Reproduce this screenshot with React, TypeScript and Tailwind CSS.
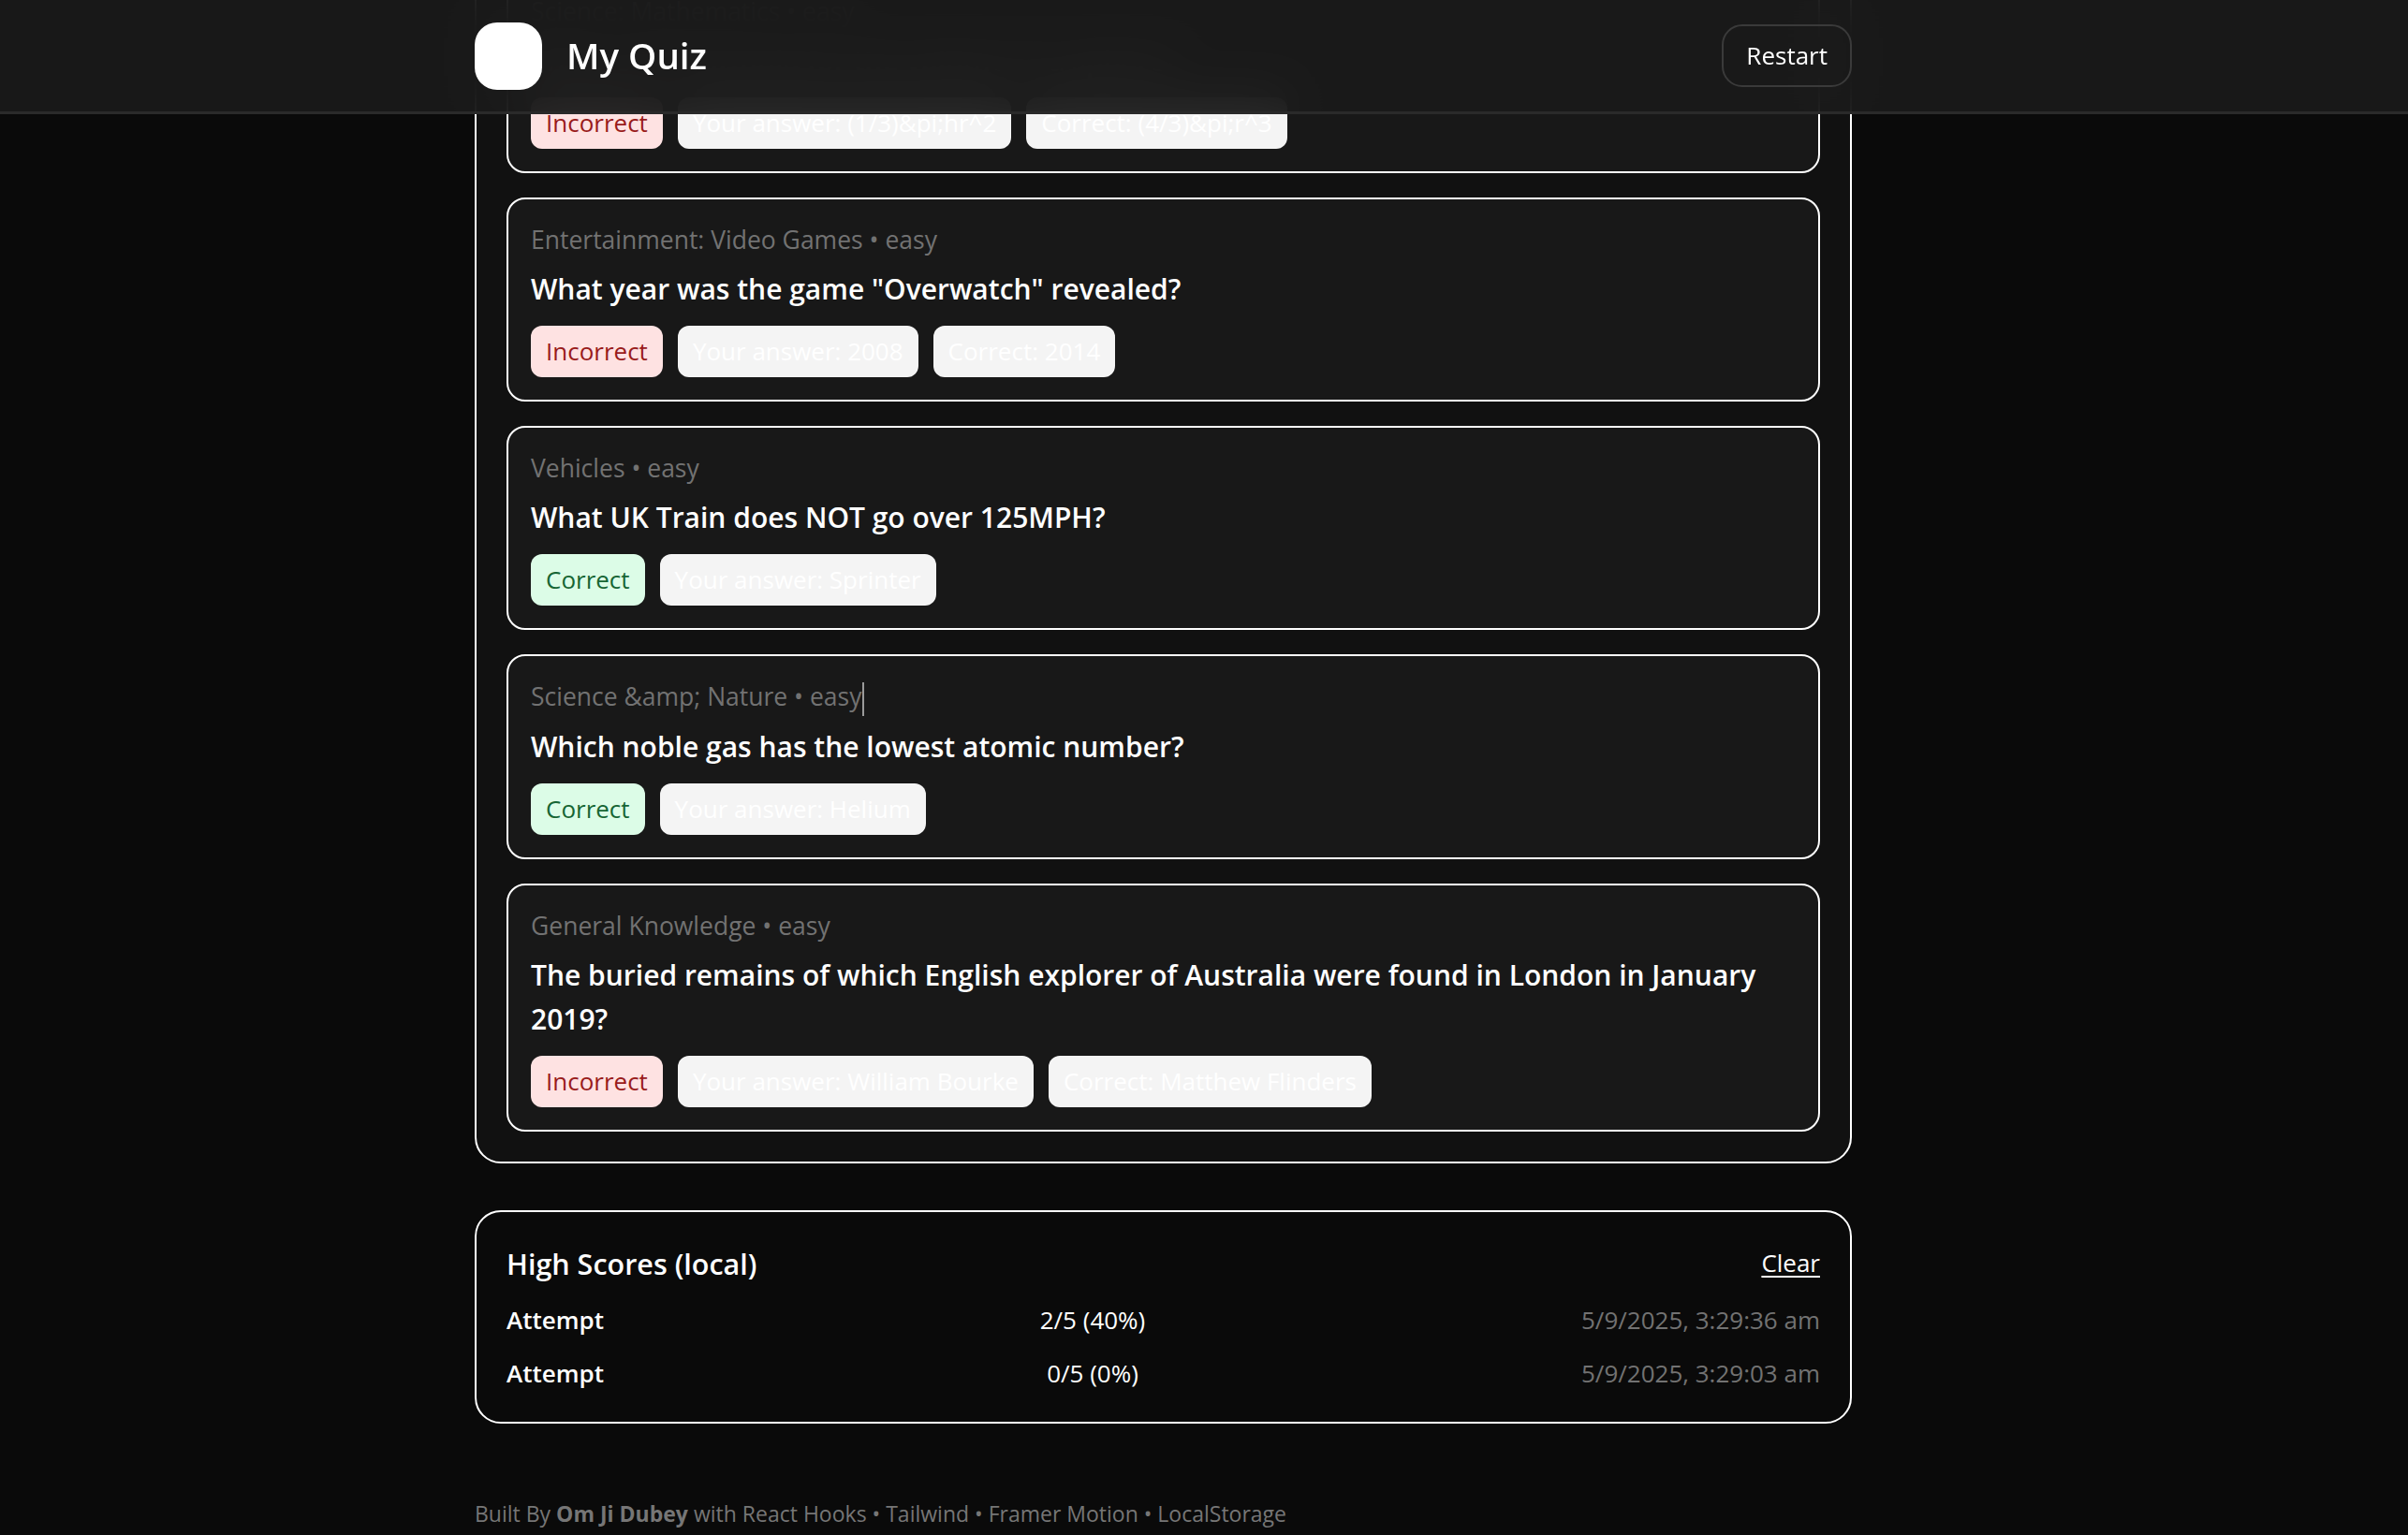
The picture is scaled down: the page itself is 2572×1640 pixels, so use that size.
import React from "react";

type Result = {
  category: string;
  difficulty: string;
  question: string;
  correct: boolean;
  answer: string;
  right?: string;
  caret?: boolean;
};

const RESULTS: Result[] = [
  {
    category: "Science: Mathematics",
    difficulty: "easy",
    question: "What is the formula for the volume of a sphere?",
    correct: false,
    answer: "(1/3)&pi;hr^2",
    right: "(4/3)&pi;r^3",
  },
  {
    category: "Entertainment: Video Games",
    difficulty: "easy",
    question: 'What year was the game "Overwatch" revealed?',
    correct: false,
    answer: "2008",
    right: "2014",
  },
  {
    category: "Vehicles",
    difficulty: "easy",
    question: "What UK Train does NOT go over 125MPH?",
    correct: true,
    answer: "Sprinter",
  },
  {
    category: "Science &amp; Nature",
    difficulty: "easy",
    question: "Which noble gas has the lowest atomic number?",
    correct: true,
    answer: "Helium",
    caret: true,
  },
  {
    category: "General Knowledge",
    difficulty: "easy",
    question:
      "The buried remains of which English explorer of Australia were found in London in January 2019?",
    correct: false,
    answer: "William Bourke",
    right: "Matthew Flinders",
  },
];

const SCORES = [
  { score: "2/5 (40%)", date: "5/9/2025, 3:29:36 am" },
  { score: "0/5 (0%)", date: "5/9/2025, 3:29:03 am" },
];

function ResultCard({ r }: { r: Result }) {
  return (
    <div className="rounded-[20px] border-2 border-white bg-[#181818] p-6">
      <div className="text-[26.5px] leading-[39px] text-[#727272]">
        {r.category} • {r.difficulty}
        {r.caret && (
          <span className="ml-px inline-block h-[36px] w-[2px] bg-[#9a9a9a] align-middle" />
        )}
      </div>
      <div className="mt-[9px] text-[30px] font-semibold leading-[47px] text-white">
        {r.question}
      </div>
      <div className="mt-4 flex flex-wrap gap-4 text-[26px] leading-[39px]">
        {r.correct ? (
          <span className="rounded-[12px] bg-[#dcfce7] px-4 py-2 text-[#166534]">Correct</span>
        ) : (
          <span className="rounded-[12px] bg-[#fee2e2] px-4 py-2 text-[#991b1b]">Incorrect</span>
        )}
        <span className="rounded-[12px] bg-[#f4f4f4] px-4 py-2 text-white">
          Your answer: {r.answer}
        </span>
        {r.right && (
          <span className="rounded-[12px] bg-[#f4f4f4] px-4 py-2 text-white">
            Correct: {r.right}
          </span>
        )}
      </div>
    </div>
  );
}

export default function App() {
  return (
    <div className="h-screen overflow-hidden bg-[#0a0a0a] font-['Open_Sans',sans-serif] text-white">
      {/* Header */}
      <header className="sticky top-0 z-10 h-[122px] border-b-[3px] border-[#2a2a2a] bg-[#1a1a1a]/[0.93] pr-[87px] backdrop-blur-[24px]">
        <div className="mx-auto flex h-full w-[1471px] items-center justify-between">
          <div className="flex items-center gap-[26px]">
            <div className="size-[72px] rounded-[24px] bg-white" />
            <span className="text-[38.5px] font-semibold">My Quiz</span>
          </div>
          <button className="h-[67px] rounded-[22px] border-2 border-[#3a3a3a] px-[24px] text-[26px]">
            Restart
          </button>
        </div>
      </header>

      <main className="-mt-[189px] pr-[87px]">
        <div className="mx-auto w-[1471px]">
          {/* Results */}
          <section className="rounded-[28px] border-2 border-white bg-[#111111] p-8">
            <div className="flex flex-col gap-[26px]">
              {RESULTS.map((r, i) => (
                <ResultCard key={i} r={r} />
              ))}
            </div>
          </section>

          {/* High scores */}
          <section className="mt-[50px] rounded-[28px] border-2 border-white p-8">
            <div className="flex items-center justify-between">
              <h2 className="text-[30.5px] font-semibold leading-[46px]">High Scores (local)</h2>
              <button className="text-[26px] underline underline-offset-4">Clear</button>
            </div>
            <div className="mt-[18px] flex flex-col gap-[18px] text-[26px] leading-[39px]">
              {SCORES.map((s, i) => (
                <div key={i} className="flex justify-between">
                  <span className="font-semibold">Attempt</span>
                  <span>{s.score}</span>
                  <span className="text-[#727272]">{s.date}</span>
                </div>
              ))}
            </div>
          </section>

          {/* Footer */}
          <footer className="mt-20 text-[23px] leading-[33px] text-[#767676]">
            Built By <span className="font-bold">Om Ji Dubey</span> with React Hooks • Tailwind •
            Framer Motion • LocalStorage
          </footer>
        </div>
      </main>
    </div>
  );
}
